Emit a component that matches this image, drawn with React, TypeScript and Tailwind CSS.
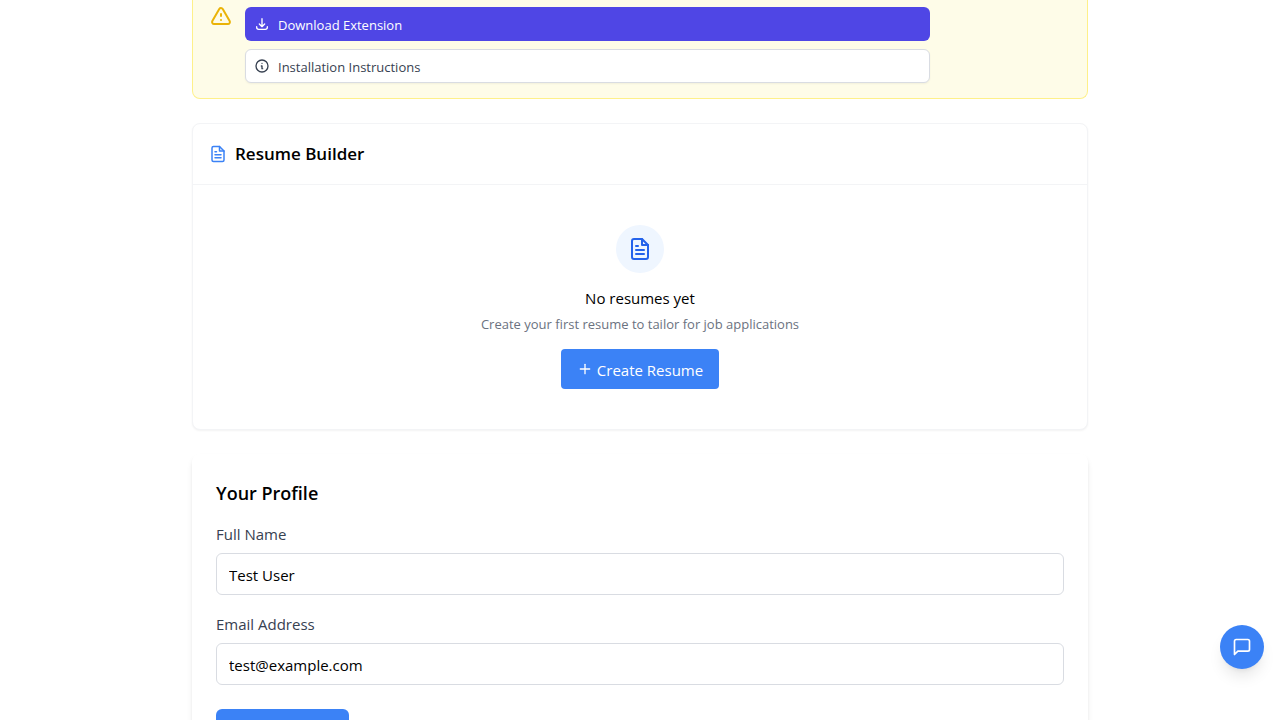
import type { ReactNode } from "react";
import { FiFileText, FiMessageSquare, FiPlus } from "react-icons/fi";

function OutlineIcon({ d, className }: { d: string; className: string }) {
  return (
    <svg
      aria-hidden="true"
      viewBox="0 0 24 24"
      fill="none"
      stroke="currentColor"
      strokeWidth={2}
      strokeLinecap="round"
      strokeLinejoin="round"
      className={className}
    >
      <path d={d} />
    </svg>
  );
}

const WARNING =
  "M12 9v2m0 4h.01m-6.938 4h13.856c1.54 0 2.502-1.667 1.732-3L13.732 4c-.77-1.333-2.694-1.333-3.464 0L3.34 16c-.77 1.333.192 3 1.732 3z";
const DOWNLOAD = "M4 16v1a3 3 0 003 3h10a3 3 0 003-3v-1m-4-4l-4 4m0 0l-4-4m4 4V4";
const INFO = "M13 16h-1v-4h-1m1-4h.01M21 12a9 9 0 11-18 0 9 9 0 0118 0z";

function ExtensionNotice() {
  return (
    <section className="flex gap-3 rounded-b-lg border-x border-b border-[#fef08a] bg-[#fefce8] px-4 pb-[15px]">
      <OutlineIcon d={WARNING} className="mt-[5px] size-6 shrink-0 text-[#eab308]" />
      <div className="mr-[141px] flex flex-1 flex-col gap-2 pt-[7px]">
        <a
          href="#download"
          className="flex h-[34px] items-center gap-2 rounded-md border border-transparent bg-[#4f46e5] px-2 text-[13px] text-white"
        >
          <OutlineIcon d={DOWNLOAD} className="size-4" />
          <span className="pt-[3px]">Download Extension</span>
        </a>
        <button
          type="button"
          className="flex h-[34px] items-center gap-2 rounded-md border border-[#d9dce2] bg-white px-2 text-[13px] text-[#374151] shadow-xs"
        >
          <OutlineIcon d={INFO} className="size-4" />
          <span className="pt-[3px]">Installation Instructions</span>
        </button>
      </div>
    </section>
  );
}

function ResumeBuilder() {
  return (
    <section className="rounded-lg border border-[#f3f4f6] bg-white shadow-xs">
      <header className="flex items-center gap-2 border-b border-[#f3f4f6] px-4 py-4">
        <FiFileText aria-hidden="true" className="size-[18px] text-[#3b82f6]" />
        <h2 className="text-[17px] leading-7 font-semibold">Resume Builder</h2>
      </header>
      <div className="flex flex-col items-center px-4 py-10 text-center">
        <div className="mb-[13px] flex size-12 items-center justify-center rounded-full bg-[#eff6ff]">
          <FiFileText aria-hidden="true" className="size-6 text-[#2563eb]" />
        </div>
        <h3 className="mb-1 text-[15px] leading-6">No resumes yet</h3>
        <p className="mb-[15px] text-[13px] leading-5 text-[#6b7280]">
          Create your first resume to tailor for job applications
        </p>
        <button
          type="button"
          className="flex h-10 items-center gap-1 rounded bg-[#3b82f6] px-4 text-[15px] text-white"
        >
          <FiPlus aria-hidden="true" className="size-4" />
          <span className="pt-0.5">Create Resume</span>
        </button>
      </div>
    </section>
  );
}

function Field({ id, label, type, value }: { id: string; label: string; type: string; value: string }) {
  return (
    <div className="mb-[17px]">
      <label htmlFor={id} className="mb-[7px] block text-[15px] leading-6 text-[#374151]">
        {label}
      </label>
      <input
        id={id}
        type={type}
        defaultValue={value}
        className="block h-[42px] w-full rounded-md border border-[#d9dce2] bg-white px-3 pt-0.5 text-[15px]"
      />
    </div>
  );
}

function Profile() {
  return (
    <section className="rounded-lg bg-white px-6 pt-[25px] pb-6 shadow-md">
      <h2 className="mb-[15px] text-[18px] leading-7 font-semibold">Your Profile</h2>
      <form>
        <Field id="name" label="Full Name" type="text" value="Test User" />
        <Field id="email" label="Email Address" type="email" value="test@example.com" />
        <button
          type="button"
          aria-label="Save profile"
          className="mt-6 block h-10 w-[133px] rounded-md bg-[#3b82f6]"
        />
      </form>
    </section>
  );
}

function Page({ children }: { children: ReactNode }) {
  return (
    <div className="h-screen overflow-hidden bg-white font-['Segoe_UI','Open_Sans',sans-serif] text-black">
      <main className="mx-auto flex max-w-4xl flex-col gap-6">{children}</main>
    </div>
  );
}

export default function App() {
  return (
    <Page>
      <ExtensionNotice />
      <ResumeBuilder />
      <Profile />
      <button
        type="button"
        aria-label="Open chat"
        className="fixed right-4 bottom-[51px] flex size-11 items-center justify-center rounded-full bg-[#3b82f6] text-white shadow-lg"
      >
        <FiMessageSquare aria-hidden="true" className="size-5" />
      </button>
    </Page>
  );
}
